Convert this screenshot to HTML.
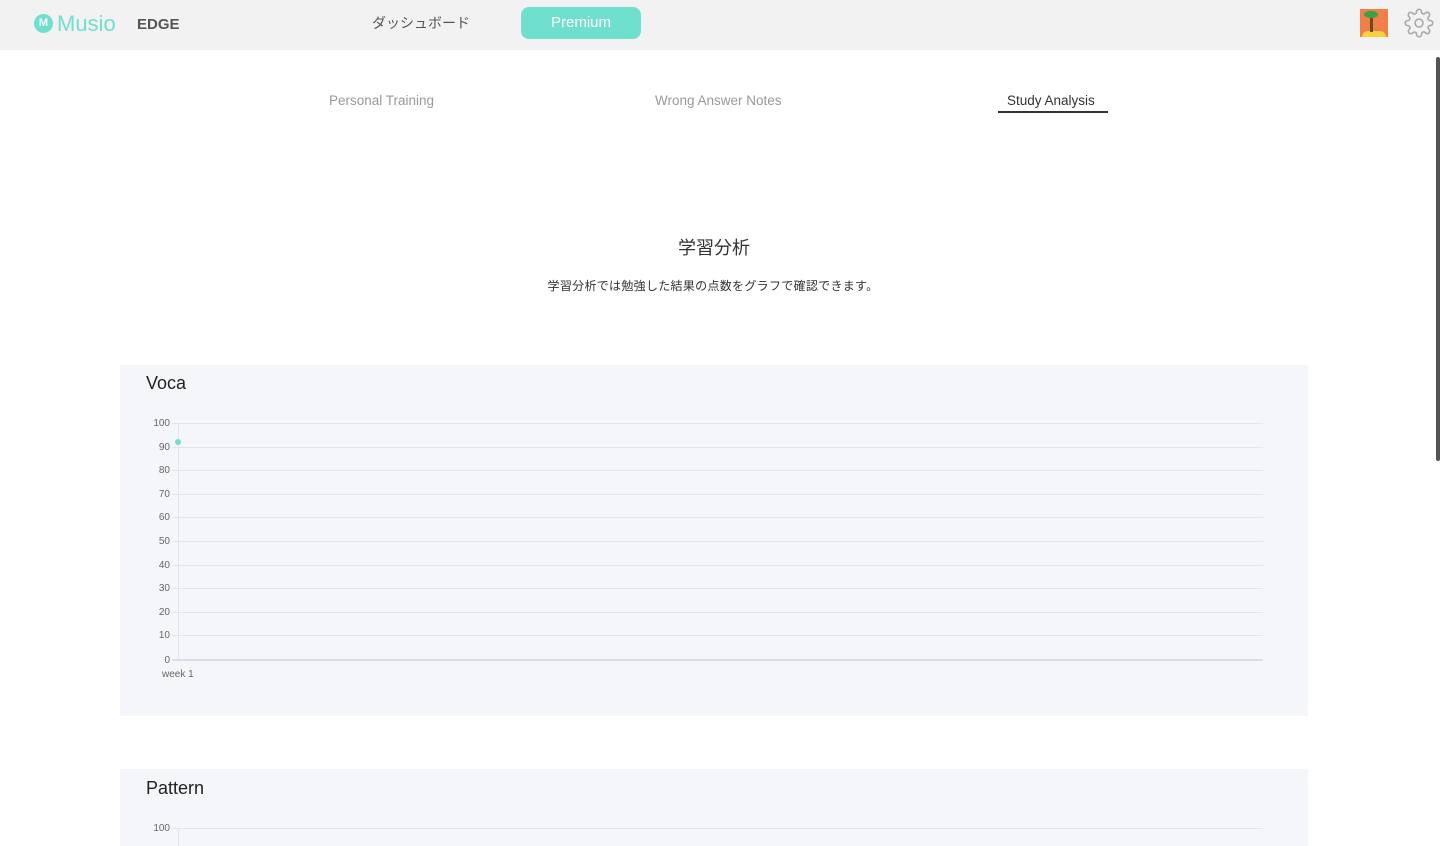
<!DOCTYPE html><html><head><meta charset="utf-8"><style>
*{margin:0;padding:0;box-sizing:border-box}
body{width:1440px;height:846px;overflow:hidden;background:#fff;font-family:"Liberation Sans","Noto Sans CJK JP",sans-serif;position:relative}
.a{position:absolute}
.hdr{left:0;top:0;width:1440px;height:50px;background:#f2f2f2}
.card{left:120px;width:1188px;background:#f5f6fa}
.yl{font-size:10px;color:#666;width:30px;text-align:right}
.gl{height:1px;background:#e4e5ea;left:172px;width:1091px}
</style></head><body>
<div class="a hdr"></div>
<div class="a" style="left:34px;top:14px;width:19px;height:19px;border-radius:50%;background:#6fe0cd;color:#fff;font-size:11px;font-weight:bold;text-align:center;line-height:19px">M</div>
<div class="a" style="left:57px;top:11px;font-size:22px;color:#6fe0cd">Musio</div>
<div class="a" style="left:137px;top:16px;font-size:15px;color:#555;font-weight:bold">EDGE</div>
<div class="a" style="left:372px;top:13px;font-size:14px;color:#555">ダッシュボード</div>
<div class="a" style="left:521px;top:7px;width:120px;height:32px;border-radius:8px;background:#6fe0cd;color:#fff;font-size:15px;text-align:center;line-height:31px">Premium</div>
<div class="a" style="left:1360px;top:9px;width:28px;height:28px;background:#f07f4a"></div>
<div class="a" style="left:1362px;top:31px;width:24px;height:6px;background:#f8d23c;border-radius:6px 6px 0 0"></div>
<div class="a" style="left:1370px;top:15px;width:3px;height:17px;background:#6b4a22"></div>
<div class="a" style="left:1364px;top:11px;width:14px;height:7px;background:#3aa043;border-radius:50%"></div>
<svg class="a" style="left:1404px;top:8px" width="30" height="30" viewBox="0 0 24 24" fill="none" stroke="#aaa" stroke-width="1.3"><circle cx="12" cy="12" r="3.2"/><path d="M19.4 15a1.7 1.7 0 0 0 .3 1.8l.1.1a2 2 0 1 1-2.8 2.8l-.1-.1a1.7 1.7 0 0 0-1.8-.3 1.7 1.7 0 0 0-1 1.5V21a2 2 0 1 1-4 0v-.1a1.7 1.7 0 0 0-1.1-1.5 1.7 1.7 0 0 0-1.8.3l-.1.1a2 2 0 1 1-2.8-2.8l.1-.1a1.7 1.7 0 0 0 .3-1.8 1.7 1.7 0 0 0-1.500-1H3a2 2 0 1 1 0-4h.1a1.7 1.7 0 0 0 1.5-1.1 1.7 1.7 0 0 0-.3-1.8l-.1-.1a2 2 0 1 1 2.8-2.8l.1.1a1.7 1.7 0 0 0 1.8.3H9a1.7 1.7 0 0 0 1-1.5V3a2 2 0 1 1 4 0v.1a1.7 1.7 0 0 0 1 1.5 1.7 1.7 0 0 0 1.8-.3l.1-.1a2 2 0 1 1 2.8 2.8l-.1.1a1.7 1.7 0 0 0-.3 1.8V9a1.7 1.7 0 0 0 1.5 1H21a2 2 0 1 1 0 4h-.1a1.7 1.7 0 0 0-1.5 1z"/></svg>
<div class="a" style="left:1436px;top:57px;width:4px;height:404px;background:#555;border-radius:2px"></div>
<div class="a" style="left:329px;top:93px;font-size:13.5px;color:#999">Personal Training</div>
<div class="a" style="left:655px;top:93px;font-size:13.5px;color:#999">Wrong Answer Notes</div>
<div class="a" style="left:1007px;top:93px;font-size:13.5px;color:#333">Study Analysis</div>
<div class="a" style="left:998px;top:111px;width:110px;height:2px;background:#333"></div>
<div class="a" style="left:0;top:234px;width:1428px;text-align:center;font-size:18px;color:#333">学習分析</div>
<div class="a" style="left:0;top:277px;width:1426px;text-align:center;font-size:12px;color:#333;letter-spacing:0.3px">学習分析では勉強した結果の点数をグラフで確認できます。</div>
<div class="a card" style="top:365px;height:351px"></div>
<div class="a" style="left:146px;top:373px;font-size:18px;color:#222">Voca</div>
<div class="a" style="left:178px;top:423px;width:1px;height:237px;background:#e4e5ea"></div>
<div class="a gl" style="top:423px"></div><div class="a gl" style="top:447px"></div><div class="a gl" style="top:470px"></div><div class="a gl" style="top:494px"></div><div class="a gl" style="top:517px"></div><div class="a gl" style="top:541px"></div><div class="a gl" style="top:565px"></div><div class="a gl" style="top:588px"></div><div class="a gl" style="top:612px"></div><div class="a gl" style="top:635px"></div>
<div class="a gl" style="top:659px;height:2px;background:#dcdde2"></div>
<div class="a yl" style="left:140px;top:418px">100</div><div class="a yl" style="left:140px;top:442px">90</div><div class="a yl" style="left:140px;top:465px">80</div><div class="a yl" style="left:140px;top:489px">70</div><div class="a yl" style="left:140px;top:512px">60</div><div class="a yl" style="left:140px;top:536px">50</div><div class="a yl" style="left:140px;top:560px">40</div><div class="a yl" style="left:140px;top:583px">30</div><div class="a yl" style="left:140px;top:607px">20</div><div class="a yl" style="left:140px;top:630px">10</div><div class="a yl" style="left:140px;top:655px">0</div>
<div class="a" style="left:162px;top:669px;font-size:10px;color:#666">week 1</div>
<div class="a" style="left:175px;top:439px;width:6px;height:6px;border-radius:50%;background:#6fe0cd"></div>
<div class="a card" style="top:769px;height:77px"></div>
<div class="a" style="left:146px;top:778px;font-size:18px;color:#222">Pattern</div>
<div class="a gl" style="top:828px"></div>
<div class="a" style="left:178px;top:828px;width:1px;height:18px;background:#e4e5ea"></div>
<div class="a yl" style="left:140px;top:823px">100</div>
</body></html>
